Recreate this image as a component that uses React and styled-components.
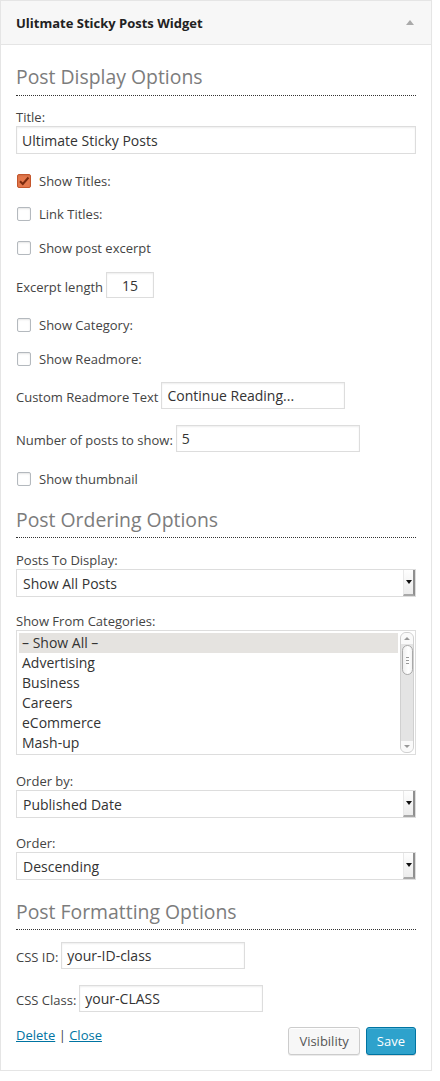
import styled, { createGlobalStyle } from "styled-components";

const GlobalStyle = createGlobalStyle`
  body {
    margin: 0;
    background: #ffffff;
    font-family: "Open Sans", "Noto Sans", sans-serif;
    color: #444;
  }
`;

const Widget = styled.div`
  width: 430px;
  border: 1px solid #e5e5e5;
  background: #fff;
  box-shadow: 0 1px 1px rgba(0, 0, 0, 0.04);
`;

const Header = styled.div`
  display: flex;
  align-items: center;
  justify-content: space-between;
  height: 43px;
  padding: 0 15px;
  background: #f7f7f7;
  border-bottom: 1px solid #e5e5e5;
`;

const HeaderTitle = styled.h3`
  margin: 0;
  font-size: 13px;
  font-weight: 700;
  color: #222;
`;

const Toggle = styled.span`
  width: 0;
  height: 0;
  margin-right: 2px;
  border-left: 4px solid transparent;
  border-right: 4px solid transparent;
  border-bottom: 5px solid #aaa;
`;

const Body = styled.div`
  display: flex;
  flex-direction: column;
  padding: 0 15px 15px;
`;

const SectionTitle = styled.h4`
  margin: ${(p) => p.$mt}px 0 0;
  padding-bottom: ${(p) => p.$pb}px;
  font-size: 19.4px;
  line-height: 28px;
  font-weight: 400;
  color: #7c7c7c;
  border-bottom: 1px dotted #333;
`;

const Label = styled.label`
  display: block;
  margin-top: ${(p) => p.$mt}px;
  font-size: 13px;
  line-height: 17px;
  color: #444;
`;

const TextInput = styled.div`
  box-sizing: border-box;
  width: ${(p) => (p.$w ? `${p.$w}px` : "100%")};
  height: ${(p) => p.$h || 28}px;
  padding: 0 ${(p) => (p.$center ? 0 : 5)}px;
  display: flex;
  align-items: center;
  justify-content: ${(p) => (p.$center ? "center" : "flex-start")};
  border: 1px solid #ddd;
  box-shadow: inset 0 1px 2px rgba(0, 0, 0, 0.07);
  background: #fff;
  font-size: 14px;
  color: #333;
`;

const InlineRow = styled.div`
  display: flex;
  align-items: center;
  gap: 3px;
  margin-top: ${(p) => p.$mt}px;
  font-size: 13px;
  color: #444;

  & > span {
    padding-top: 3px;
  }
`;

const CheckRow = styled.div`
  display: flex;
  align-items: center;
  height: 20px;
  margin-top: ${(p) => p.$mt}px;
  font-size: 13px;
  color: #444;
`;

const Box = styled.span`
  box-sizing: border-box;
  width: 14px;
  height: 14px;
  margin: 0 8px 0 1px;
  border-radius: 2px;
  border: 1px solid ${(p) => (p.$on ? "#c4562c" : "#b4b9be")};
  background: ${(p) => (p.$on ? "#e5784c" : "#fff")};
  box-shadow: inset 0 1px 2px rgba(0, 0, 0, 0.1);
  display: flex;
  align-items: center;
  justify-content: center;
`;

const Select = styled.div`
  box-sizing: border-box;
  display: flex;
  align-items: stretch;
  height: 28px;
  border: 1px solid #ddd;
  background: #fff;
`;

const SelectValue = styled.span`
  flex: 1;
  display: flex;
  align-items: center;
  padding-left: 6px;
  font-size: 14px;
  color: #333;
`;

const SelectArrow = styled.span`
  width: 9px;
  display: flex;
  align-items: center;
  justify-content: center;
  background: linear-gradient(#fefefe, #ececec);
  border-right: 2px solid #8f8f8f;
  border-bottom: 2px solid #a8a8a8;
  border-left: 1px solid #e8e8e8;

  &::after {
    content: "";
    border-left: 3px solid transparent;
    border-right: 3px solid transparent;
    border-top: 4px solid #111;
  }
`;

const ListBox = styled.div`
  box-sizing: border-box;
  display: flex;
  height: 125px;
  border: 1px solid #ddd;
  background: #fff;
`;

const Options = styled.div`
  flex: 1;
  padding: 2px 2px 0 2px;
  overflow: hidden;
`;

const Option = styled.div`
  height: 20px;
  line-height: 20px;
  padding-left: 3px;
  font-size: 14px;
  color: #333;
  background: ${(p) => (p.$selected ? "#e5e3e0" : "transparent")};
`;

const Scrollbar = styled.div`
  width: 12px;
  margin: 1px 1px 1px 0;
  display: flex;
  flex-direction: column;
  align-items: center;
  border: 1px solid #d0d0d0;
  border-radius: 6px;
  background: #e4e4e4;
  overflow: hidden;
`;

const ScrollButton = styled.span`
  width: 100%;
  height: 11px;
  display: flex;
  align-items: center;
  justify-content: center;
  background: #fafafa;

  &::after {
    content: "";
    border-left: 3px solid transparent;
    border-right: 3px solid transparent;
    ${(p) =>
      p.$down ? "border-top: 3px solid #999;" : "border-bottom: 3px solid #999;"}
  }
`;

const Track = styled.span`
  flex: 1;
`;

const Thumb = styled.span`
  box-sizing: border-box;
  width: 11px;
  height: 30px;
  margin-top: 1px;
  border: 1px solid #a9a9a9;
  border-radius: 6px;
  background: linear-gradient(90deg, #f0f0f0, #ffffff 60%, #f4f4f4);
  display: flex;
  flex-direction: column;
  align-items: center;
  justify-content: center;
  gap: 2px;

  & > i {
    width: 3px;
    height: 1px;
    background: #999;
  }
`;

const Footer = styled.div`
  display: flex;
  justify-content: space-between;
  align-items: flex-start;
  margin-top: 15px;
`;

const Links = styled.div`
  font-size: 13px;
  line-height: 17px;
  color: #444;
`;

const Link = styled.a`
  color: #0074a2;
  text-decoration: underline;
`;

const Buttons = styled.div`
  display: flex;
  gap: 6px;
`;

const Button = styled.button`
  height: 28px;
  padding: 0 10px;
  border-radius: 3px;
  font-family: inherit;
  font-size: 13px;
  border: 1px solid ${(p) => (p.$primary ? "#0074a2" : "#ccc")};
  background: ${(p) => (p.$primary ? "#2ea2cc" : "#f7f7f7")};
  color: ${(p) => (p.$primary ? "#fff" : "#555")};
  box-shadow: ${(p) =>
    p.$primary
      ? "inset 0 1px 0 rgba(120, 200, 230, 0.5), 0 1px 0 rgba(0, 0, 0, 0.15)"
      : "inset 0 1px 0 #fff, 0 1px 0 rgba(0, 0, 0, 0.08)"};
`;

function Check({ on, label, mt }) {
  return (
    <CheckRow $mt={mt}>
      <Box $on={on}>
        {on && (
          <svg width="12" height="12" viewBox="0 0 12 12">
            <path
              d="M2 6.2 L4.8 9 L10.5 2.5"
              fill="none"
              stroke="#7a2a0e"
              strokeWidth="2"
            />
          </svg>
        )}
      </Box>
      {label}
    </CheckRow>
  );
}

function Dropdown({ value }) {
  return (
    <Select>
      <SelectValue>{value}</SelectValue>
      <SelectArrow />
    </Select>
  );
}

const categories = [
  "– Show All –",
  "Advertising",
  "Business",
  "Careers",
  "eCommerce",
  "Mash-up",
];

export default function App() {
  return (
    <>
      <GlobalStyle />
      <Widget>
        <Header>
          <HeaderTitle>Ulitmate Sticky Posts Widget</HeaderTitle>
          <Toggle />
        </Header>
        <Body>
          <SectionTitle $mt={18} $pb={4}>
            Post Display Options
          </SectionTitle>
          <Label $mt={13}>Title:</Label>
          <TextInput>Ultimate Sticky Posts</TextInput>

          <Check on label="Show Titles:" mt={17} />
          <Check label="Link Titles:" mt={13} />
          <Check label="Show post excerpt" mt={14} />

          <InlineRow $mt={14}>
            <span>Excerpt length</span>
            <TextInput $w={48} $h={26} $center>
              15
            </TextInput>
          </InlineRow>

          <Check label="Show Category:" mt={17} />
          <Check label="Show Readmore:" mt={14} />

          <InlineRow $mt={13}>
            <span>Custom Readmore Text</span>
            <TextInput $w={184} $h={27}>
              Continue Reading...
            </TextInput>
          </InlineRow>
          <InlineRow $mt={16}>
            <span>Number of posts to show:</span>
            <TextInput $w={184} $h={27}>
              5
            </TextInput>
          </InlineRow>

          <Check label="Show thumbnail" mt={17} />

          <SectionTitle $mt={17} $pb={3}>
            Post Ordering Options
          </SectionTitle>
          <Label $mt={14}>Posts To Display:</Label>
          <Dropdown value="Show All Posts" />

          <Label $mt={16}>Show From Categories:</Label>
          <ListBox>
            <Options>
              {categories.map((c, i) => (
                <Option key={c} $selected={i === 0}>
                  {c}
                </Option>
              ))}
            </Options>
            <Scrollbar>
              <ScrollButton />
              <Thumb>
                <i />
                <i />
                <i />
              </Thumb>
              <Track />
              <ScrollButton $down />
            </Scrollbar>
          </ListBox>

          <Label $mt={18}>Order by:</Label>
          <Dropdown value="Published Date" />
          <Label $mt={17}>Order:</Label>
          <Dropdown value="Descending" />

          <SectionTitle $mt={18} $pb={3}>
            Post Formatting Options
          </SectionTitle>
          <InlineRow $mt={12}>
            <span>CSS ID:</span>
            <TextInput $w={184} $h={27}>
              your-ID-class
            </TextInput>
          </InlineRow>
          <InlineRow $mt={16}>
            <span>CSS Class:</span>
            <TextInput $w={184} $h={27}>
              your-CLASS
            </TextInput>
          </InlineRow>

          <Footer>
            <Links>
              <Link href="#delete">Delete</Link> | <Link href="#close">Close</Link>
            </Links>
            <Buttons>
              <Button>Visibility</Button>
              <Button $primary>Save</Button>
            </Buttons>
          </Footer>
        </Body>
      </Widget>
    </>
  );
}
